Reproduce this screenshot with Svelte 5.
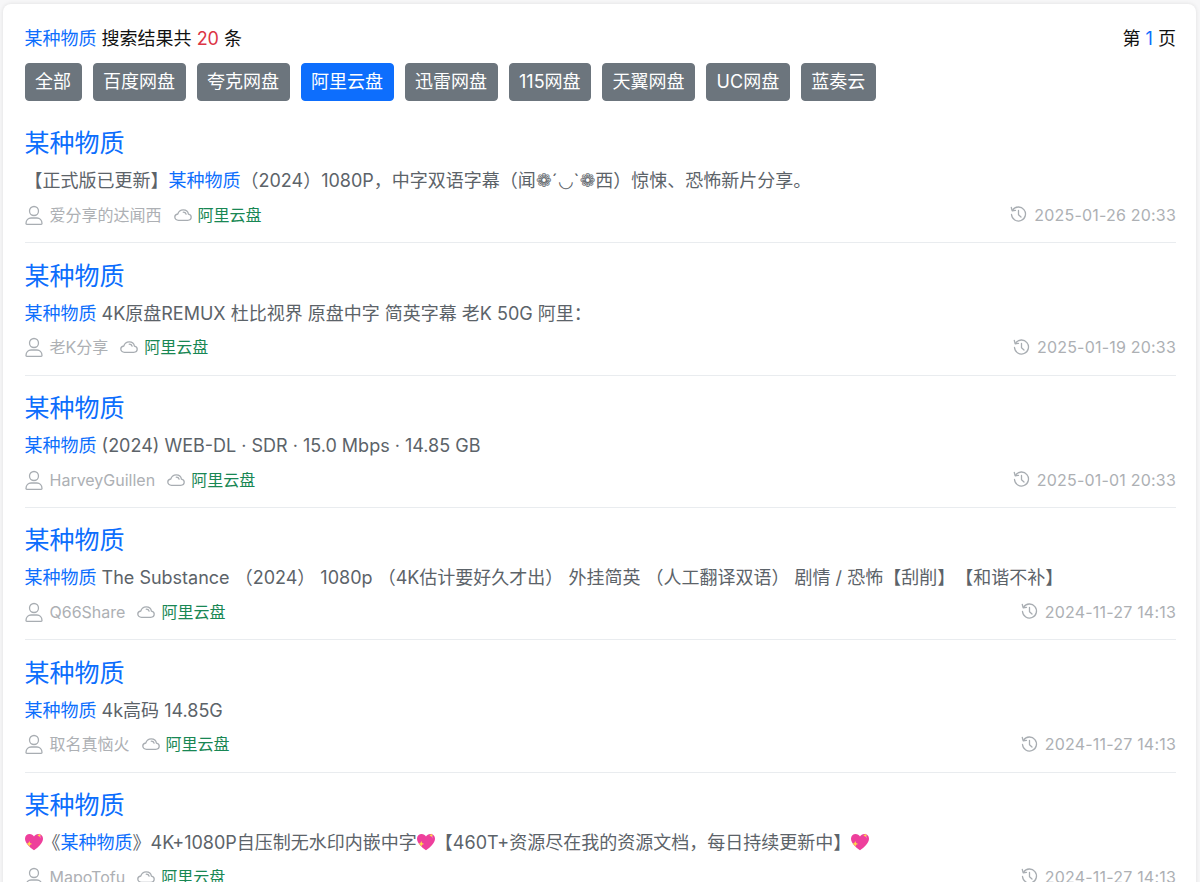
<script>
  const keyword = '某种物质';
  const tabs = ['全部', '百度网盘', '夸克网盘', '阿里云盘', '迅雷网盘', '115网盘', '天翼网盘', 'UC网盘', '蓝奏云'];
  const activeTab = '阿里云盘';

  // k = keyword highlight, h = heart emoji, f = florette, anything else is plain text
  const results = [
    {
      desc: ['【正式版已更新】', { k: 1 }, '（2024）1080P，中字双语字幕（闻', { f: 1 }, '´◡`', { f: 1 }, '西）惊悚、恐怖新片分享。'],
      user: '爱分享的达闻西',
      time: '2025-01-26 20:33'
    },
    {
      desc: [{ k: 1 }, ' 4K原盘REMUX 杜比视界 原盘中字 简英字幕 老K 50G 阿里：'],
      user: '老K分享',
      time: '2025-01-19 20:33'
    },
    {
      desc: [{ k: 1 }, ' (2024) WEB-DL · SDR · 15.0 Mbps · 14.85 GB'],
      user: 'HarveyGuillen',
      time: '2025-01-01 20:33'
    },
    {
      desc: [{ k: 1 }, ' The Substance （2024） 1080p （4K估计要好久才出） 外挂简英 （人工翻译双语） 剧情 / 恐怖【刮削】【和谐不补】'],
      user: 'Q66Share',
      time: '2024-11-27 14:13'
    },
    {
      desc: [{ k: 1 }, ' 4k高码 14.85G'],
      user: '取名真恼火',
      time: '2024-11-27 14:13'
    },
    {
      desc: [{ h: 1 }, '《', { k: 1 }, '》4K+1080P自压制无水印内嵌中字', { h: 1 }, '【460T+资源尽在我的资源文档，每日持续更新中】', { h: 1 }],
      user: 'MapoTofu',
      time: '2024-11-27 14:13'
    }
  ];
</script>

{#snippet heart()}
  <svg class="heart" viewBox="0.5 1.500 19 18" aria-hidden="true">
    <path d="M10 19.300C5 15.500.5 11.500.5 7c0-3 2.200-5 4.900-5C7.400 2 9.100 3 10 4.600 10.900 3 12.600 2 14.600 2c2.700 0 4.900 2 4.900 5 0 4.500-4.500 8.500-9.500 12.300z" fill="#ee3f9c" />
    <path d="M14.500 3.500c2 .3 3.200 1.800 3 3.800-.3-1.400-1.400-2.800-3-3.800z" fill="#ff9ed2" />
    <path d="M5 9.500l.9 2.100 2.100.9-2.100.9L5 15.500l-.9-2.100-2.100-.9 2.100-.9z" fill="#ffd84a" />
    <path d="M15.500 1.500l.6 1.400 1.400.6-1.400.6-.6 1.400-.6-1.400-1.400-.6 1.400-.6z" fill="#ffd84a" />
  </svg>
{/snippet}

<div class="card">
  <div class="summary">
    <div><span class="kw">{keyword}</span> 搜索结果共 <span class="count">20</span> 条</div>
    <div>第 <span class="kw">1</span> 页</div>
  </div>

  <div class="tabs">
    {#each tabs as tab}
      <button class="tab" class:active={tab === activeTab}>{tab}</button>
    {/each}
  </div>

  {#each results as item}
    <div class="item">
      <a class="title" href="#top">{keyword}</a>
      <p class="desc">
        {#each item.desc as part}
          {#if part.k}<span class="kw">{keyword}</span>{:else if part.h}{@render heart()}{:else if part.f}<span class="flower">❁</span>{:else}{part}{/if}
        {/each}
      </p>
      <div class="meta">
        <svg class="icon person" viewBox="0 0 18 20" aria-hidden="true">
          <circle cx="9" cy="6" r="4.500" />
          <path d="M1 18.500c0-3.500 2.500-5.500 5-5.500h6c2.500 0 5 2 5 5.500 0 .5-.3.800-.8.800H1.800c-.5 0-.8-.3-.8-.8z" />
        </svg>
        <span class="user">{item.user}</span>
        <svg class="icon cloud" viewBox="0 0 18 12" aria-hidden="true">
          <path d="M4.500 11.300C2.400 11.300.8 9.900.8 8.100c0-1.600 1.300-2.900 3-3.100C4.500 2.500 6.600.8 9.200.8c2.700 0 4.900 1.900 5.200 4.300 1.600.3 2.800 1.500 2.800 3 0 1.800-1.500 3.200-3.500 3.200z" />
          <path d="M9.300 3.200c1.300 0 2.500.8 2.800 2" />
        </svg>
        <span class="pan">阿里云盘</span>
        <span class="time">
          <svg class="icon history" viewBox="0 0 17 17" aria-hidden="true">
            <path d="M2.600 4.200A7 7 0 1 1 1.500 8.500" />
            <path d="M1.300 1.500l.9 3.300 3.300-.5" />
            <path d="M8.500 4.500v4.300l2.500 2.200" />
          </svg>
          <span class="stamp">{item.time}</span>
        </span>
      </div>
    </div>
  {/each}
</div>

<style>
  :global(body) {
    background: #f7f7f8;
    overflow: hidden;
  }

  .card {
    box-sizing: border-box;
    margin: 4px 4px 0 3px;
    padding: 22px 20px 0 21.5px;
    background: #fff;
    border-radius: 8px;
    box-shadow: 0 0 4px rgba(0, 0, 0, 0.1);
    font-family: Inter, "Noto Sans CJK SC", sans-serif;
    font-size: 18px;
    color: #212529;
    text-spacing-trim: space-all;
  }

  .summary {
    display: flex;
    justify-content: space-between;
    line-height: 26px;
    color: #111;
  }

  .kw {
    color: #0d6efd;
  }

  .count {
    color: #dc3545;
  }

  .tabs {
    display: flex;
    gap: 11px;
    margin: 11px 0 9.8px;
  }

  .tab {
    height: 38px;
    padding: 0 9.5px;
    border: 1px solid #6c757d;
    border-radius: 4px;
    background: #6c757d;
    color: #fff;
    font: inherit;
    line-height: 1;
  }

  .tab.active {
    background: #0d6efd;
    border-color: #0d6efd;
  }

  .item {
    padding: 17.5px 0 15.4px;
    border-bottom: 1px solid #e9ecef;
  }

  .title {
    display: block;
    font-size: 25px;
    line-height: 30px;
    color: #0d6efd;
    text-decoration: none;
  }

  .desc {
    margin: 9px 0 0;
    font-size: 18px;
    line-height: 27px;
    color: #5c6369;
    white-space: pre-wrap;
  }

  .flower {
    font-family: "DejaVu Sans", sans-serif;
    font-size: 19px;
    color: #62686e;
  }

  .heart {
    width: 18px;
    height: 18px;
    vertical-align: -2px;
  }

  .meta {
    display: flex;
    align-items: center;
    margin-top: 8.500px;
    font-size: 16px;
    line-height: 24px;
    color: #adb0b4;
  }

  .icon {
    flex: none;
    fill: none;
    stroke: #a8adb2;
    stroke-width: 1.300;
    stroke-linecap: round;
    stroke-linejoin: round;
  }

  .person {
    width: 18px;
    height: 20px;
    margin-right: 7px;
  }

  .cloud {
    width: 18px;
    height: 12px;
    margin: 0 6px 0 12px;
  }

  .pan {
    color: #198754;
  }

  .time {
    display: flex;
    align-items: center;
    gap: 7px;
    margin-left: auto;
  }

  .stamp {
    letter-spacing: 0.2px;
  }

  .history {
    width: 17px;
    height: 17px;
  }
</style>
